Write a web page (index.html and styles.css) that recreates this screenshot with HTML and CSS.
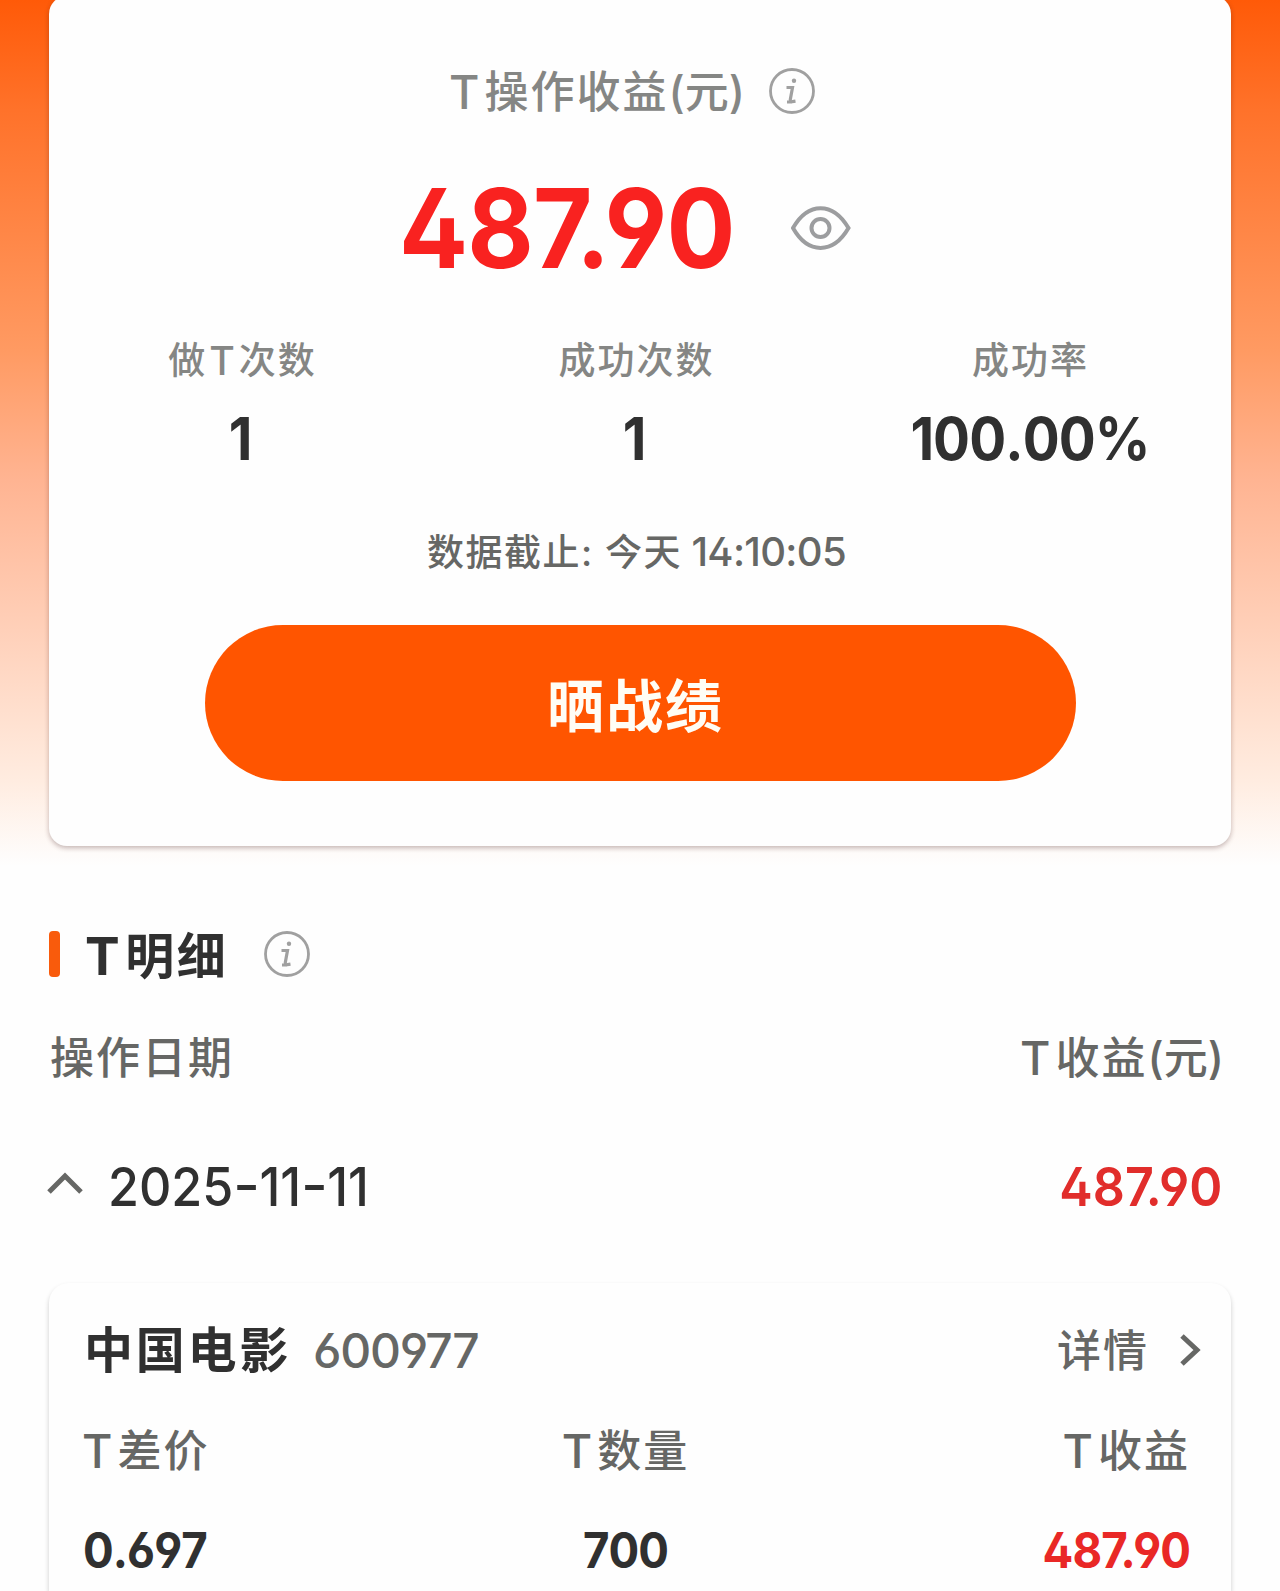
FILE: index.html
```html
<!DOCTYPE html>
<html lang="zh-CN">
<head>
    <meta charset="UTF-8">
    <meta name="viewport" content="width=device-width, initial-scale=1.0">
    <title>T操作收益</title>
    <link rel="stylesheet" href="styles.css">
</head>
<body>
    <div class="hero">
        <div class="summary">
            <div class="summary-title">
                <span class="title-text"><span class="latin">T</span>操作收益<span class="unit">(元)</span></span>
                <svg class="info" viewBox="0 0 46 46">
                    <circle cx="23" cy="23" r="21.5"/>
                    <circle class="dot" cx="25" cy="12.8" r="2.2"/>
                    <path d="M17.500 19.5H23.500L21.3 31.5Q21 34 23.3 33.7L26.5 33.2M18 34H23"/>
                </svg>
            </div>
            <div class="profit">
                <span class="profit-value">48<span class="seven">7</span><span class="point">.</span>90</span>
                <svg class="eye" viewBox="0 0 60 46">
                    <path d="M2 23C17-3.500 42-3.500 57.500 23C42 49.500 17 49.500 2 23Z"/>
                    <circle cx="29.5" cy="23" r="9"/>
                </svg>
            </div>
            <div class="stats">
                <div class="stat">
                    <p class="stat-label">做<span class="latin">T</span>次数</p>
                    <p class="stat-value single">1</p>
                </div>
                <div class="stat">
                    <p class="stat-label">成功次数</p>
                    <p class="stat-value single">1</p>
                </div>
                <div class="stat">
                    <p class="stat-label">成功率</p>
                    <p class="stat-value">100.00%</p>
                </div>
            </div>
            <p class="deadline">数据截止: 今天 <span class="time">14:10:05</span></p>
            <a href="#" class="btn">晒战绩</a>
        </div>
    </div>

    <div class="detail">
        <div class="detail-title">
            <h2><span class="latin">T</span>明细</h2>
            <svg class="info" viewBox="0 0 46 46">
                <circle cx="23" cy="23" r="21.5"/>
                <circle class="dot" cx="25" cy="12.8" r="2.2"/>
                <path d="M17.500 19.5H23.500L21.3 31.5Q21 34 23.3 33.7L26.5 33.2M18 34H23"/>
            </svg>
        </div>
        <div class="row head">
            <span>操作日期</span>
            <span><span class="latin">T</span>收益<span class="unit">(元)</span></span>
        </div>
        <div class="row day">
            <svg class="up" viewBox="0 0 36 22"><path d="M2 20L18 4L34 20"/></svg>
            <span class="date">2025<i></i>11<i></i>11</span>
            <span class="day-profit">48<span class="seven">7</span><span class="point">.</span>90</span>
        </div>

        <div class="stock">
            <div class="row stock-head">
                <span class="name">中国电影</span>
                <span class="code">600977</span>
                <a href="#" class="more">详情</a>
                <svg class="next" viewBox="0 0 22 34"><path d="M3 3L18 17L3 31"/></svg>
            </div>
            <div class="cols labels">
                <span><span class="latin">T</span>差价</span>
                <span><span class="latin">T</span>数量</span>
                <span><span class="latin">T</span>收益</span>
            </div>
            <div class="cols values">
                <span>0.697</span>
                <span>700</span>
                <span class="red">48<span class="seven">7</span><span class="point">.</span>90</span>
            </div>
        </div>
    </div>
</body>
</html>
```
FILE: styles.css
```css
* {
    margin: 0;
    padding: 0;
    box-sizing: border-box;
}
body {
    font-family: Inter, "Noto Sans CJK SC", sans-serif;
    font-feature-settings: "ss01";
    font-weight: 500;
    background: #fefefe;
    color: #303030;
    height: 1591px;
    overflow: hidden;
}
a {
    color: inherit;
    text-decoration: none;
}
svg {
    display: block;
    flex: none;
    fill: none;
}
.hero {
    height: 866px;
    padding: 0 49px;
    background: linear-gradient(#ff5a08, #ff722a 110px, #ff9a62 350px, #ffb492 480px, #ffece0 780px, #fefefe);
}
.summary {
    height: 850px;
    padding-top: 66px;
    background: #fefefe;
    border-radius: 18px;
    box-shadow: 0 2px 5px rgba(60, 20, 20, 0.3);
    transform: translateY(-4px);
}
.summary-title {
    display: flex;
    align-items: center;
    height: 60px;
    padding-left: 400px;
    font-size: 44px;
    line-height: 60px;
    letter-spacing: 2px;
    color: #858684;
}
.summary-title .info {
    margin-bottom: 3px;
}
.title-text {
    width: 320px;
    white-space: nowrap;
}
.unit {
    letter-spacing: 0;
}
.latin {
    margin-right: 3px;
    font-size: 1.06em;
    line-height: 1;
    vertical-align: -0.03em;
}
.info {
    width: 46px;
    height: 46px;
    stroke: #a0a0a0;
    stroke-width: 2.8;
}
.info path {
    stroke-width: 3.2;
}
.info .dot {
    fill: #a0a0a0;
    stroke: none;
}
.profit {
    display: flex;
    align-items: center;
    height: 120px;
    margin-top: 46px;
    padding-left: 350px;
}
/* digits are set a little narrower than the face draws them */
.profit-value,
.stat-value,
.date,
.day-profit,
.cols.values > span {
    font-kerning: none;
    transform: scaleX(0.93);
}
.profit-value {
    width: 340px;
    font-size: 110px;
    font-weight: 700;
    line-height: 120px;
    letter-spacing: -1px;
    white-space: nowrap;
    color: #f92220;
    transform-origin: left;
}
.seven {
    letter-spacing: -0.16em;
}
.point {
    letter-spacing: -0.055em;
}
.eye {
    width: 60px;
    height: 46px;
    margin-left: 52px;
    stroke: #9c9d9f;
    stroke-width: 4;
}
.stats {
    display: grid;
    grid-template-columns: repeat(3, 1fr);
    margin: 48px 4px 0 -4px;
    text-align: center;
}
.stat-label {
    font-size: 37px;
    line-height: 50px;
    letter-spacing: 2px;
    padding-left: 1px;
    color: #858684;
}
.stat-label .latin {
    margin: 0 2px;
}
.stat-value {
    margin-top: 18px;
    font-size: 59px;
    font-weight: 700;
    line-height: 70px;
    letter-spacing: -1px;
}
.single {
    padding-right: 4px;
}
.deadline {
    margin-top: 54px;
    padding-left: 378px;
    font-size: 37px;
    line-height: 50px;
    letter-spacing: 1.5px;
    color: #666765;
    white-space: nowrap;
}
.time {
    font-size: 40px;
    line-height: 1;
    letter-spacing: -0.7px;
    margin-left: -2px;
}
.btn {
    display: block;
    width: 871px;
    height: 156px;
    margin: 47px auto 0;
    padding-right: 9px;
    border-radius: 78px;
    background: #ff5500;
    color: #fffdf5;
    font-size: 57px;
    font-weight: 700;
    line-height: 163px;
    letter-spacing: 2px;
    text-align: center;
}
.detail {
    padding: 58px 49px 0;
}
.detail-title {
    display: flex;
    align-items: center;
    height: 60px;
}
.detail-title::before {
    content: "";
    width: 11px;
    height: 46px;
    margin-right: 25px;
    border-radius: 4px;
    background: #f95b0c;
}
.detail-title h2 {
    width: 179px;
    padding-top: 5px;
    font-size: 49px;
    line-height: 60px;
    letter-spacing: 2.500px;
    white-space: nowrap;
}
.row {
    display: flex;
    align-items: center;
    height: 60px;
    line-height: 60px;
}
.head {
    justify-content: space-between;
    margin-top: 44px;
    padding: 0 7px 0 1px;
    font-size: 44px;
    letter-spacing: 2px;
    color: #666765;
}
.day {
    margin: 69px 0 0 -2px;
    padding-right: 9px;
    font-size: 54px;
}
.up {
    width: 36px;
    height: 22px;
    margin: -8px 25px 0 0;
    stroke: #666765;
    stroke-width: 5;
}
.date {
    display: flex;
    align-items: center;
    font-weight: 550;
    transform-origin: left;
}
/* short dash between the date parts */
.date i {
    width: 20px;
    height: 5px;
    margin: 0 4px;
    background: #303030;
}
.day-profit {
    margin-left: auto;
    font-weight: 600;
    color: #e12d2b;
    transform-origin: right;
}
.stock {
    height: 308px;
    margin-top: 66px;
    padding: 38px 41px 0 34px;
    border-radius: 20px 20px 0 0;
    box-shadow: 0 3px 5px rgba(0, 0, 0, 0.2);
}
.name {
    width: 230px;
    padding-left: 1px;
    font-size: 49px;
    font-weight: 700;
    letter-spacing: 2.800px;
    white-space: nowrap;
}
.code {
    font-size: 48px;
    letter-spacing: -1.2px;
    color: #666765;
}
.more {
    margin-left: auto;
    font-size: 44px;
    letter-spacing: 2px;
    color: #666765;
}
.next {
    width: 22px;
    height: 34px;
    margin: -2px -11px 0 30px;
    stroke: #666765;
    stroke-width: 5;
}
.cols {
    display: grid;
    grid-template-columns: repeat(3, 1fr);
    height: 60px;
    line-height: 60px;
}
.cols > :first-child {
    margin-left: -1px;
}
.cols > :nth-child(2) {
    margin-left: -22px;
    text-align: center;
}
.cols > :nth-child(3) {
    text-align: right;
}
.labels {
    margin-top: 40px;
    font-size: 44px;
    letter-spacing: 2px;
    color: #666765;
}
.values {
    margin-top: 40px;
    font-size: 49px;
    font-weight: 700;
    letter-spacing: -1px;
}
.cols.values > :first-child {
    margin-left: 0;
    transform-origin: left;
}
.cols.values > :last-child {
    transform-origin: right;
}
.red {
    color: #e92826;
}
```
